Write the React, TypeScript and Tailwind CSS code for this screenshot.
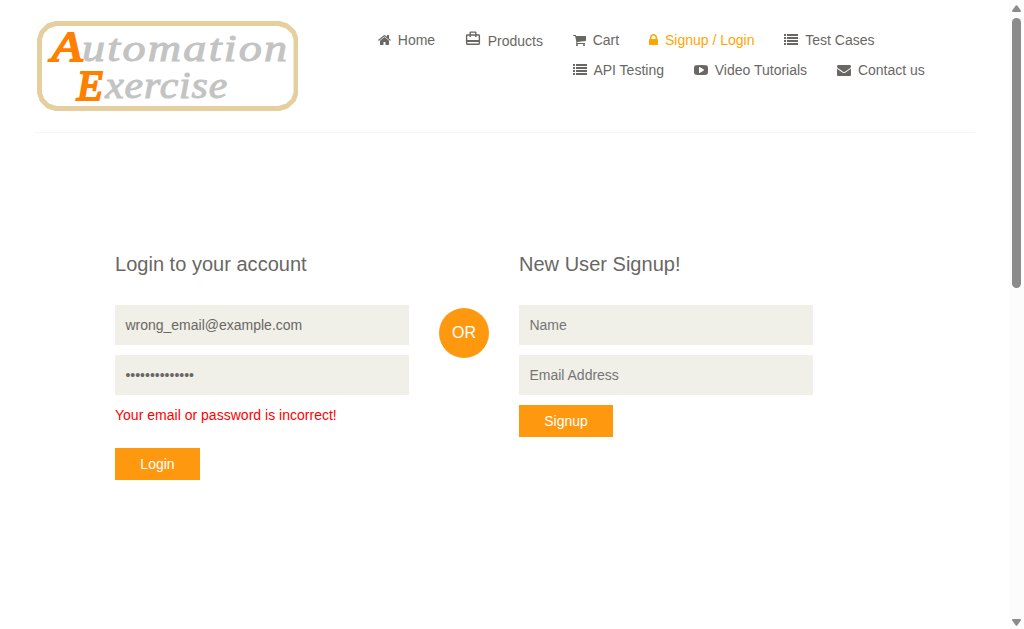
import React from "react";

type IconProps = { d: string; viewBox: string; className: string };

function Glyph({ d, viewBox, className }: IconProps) {
  return (
    <svg viewBox={viewBox} className={className} fill="currentColor" aria-hidden="true">
      <path d={d} />
    </svg>
  );
}

const HOME =
  "M1472 992v480q0 26-19 45t-45 19h-384v-384h-256v384h-384q-26 0-45-19t-19-45v-480q0-1 .5-3t.5-3l575-474 575 474q1 2 1 6zm223-69l-62 74q-8 9-21 11h-3q-13 0-21-7l-692-577-692 577q-12 8-24 7-13-2-21-11l-62-74q-8-10-7-23.5t11-21.5l719-599q32-26 76-26t76 26l244 204v-195q0-14 9-23t23-9h192q14 0 23 9t9 23v408l219 182q10 8 11 21.5t-7 23.5z";
const TRAVEL =
  "M20 6h-3V4c0-1.11-.89-2-2-2H9c-1.11 0-2 .89-2 2v2H4c-1.11 0-2 .89-2 2v11c0 1.11.89 2 2 2h16c1.11 0 2-.89 2-2V8c0-1.11-.89-2-2-2zM9 4h6v2H9V4zm11 15H4v-2h16v2zm0-5H4V8h3v2h2V8h6v2h2V8h3v6z";
const CART =
  "M704 1536q0 52-38 90t-90 38-90-38-38-90 38-90 90-38 90 38 38 90zm896 0q0 52-38 90t-90 38-90-38-38-90 38-90 90-38 90 38 38 90zm128-1088v512q0 24-16.5 42.5t-40.5 21.5l-1044 122q13 60 13 70 0 16-24 64h920q26 0 45 19t19 45-19 45-45 19h-1024q-26 0-45-19t-19-45q0-11 8-31.5t16-36 21.5-40 15.5-29.5l-177-823h-204q-26 0-45-19t-19-45 19-45 45-19h256q16 0 28.5 6.5t19.5 15.5 13 24.5 8 26 5.5 29.5 4.5 26h1201q26 0 45 19t19 45z";
const LOCK =
  "M640 768h512v-192q0-106-75-181t-181-75-181 75-75 181v192zm832 96v576q0 40-28 68t-68 28h-960q-40 0-68-28t-28-68v-576q0-40 28-68t68-28h32v-192q0-184 132-316t316-132 316 132 132 316v192h32q40 0 68 28t28 68z";
const LIST =
  "M0 1h2v2H0zM3 1h11v2H3zM0 4h2v2H0zM3 4h11v2H3zM0 7h2v2H0zM3 7h11v2H3zM0 10h2v2H0zM3 10h11v2H3z";
const PLAY =
  "M1280 896q0-37-30-54l-512-320q-31-20-65-2-33 18-33 56v640q0 38 33 56 16 8 31 8 20 0 34-10l512-320q30-17 30-54zm512 0q0 96-1 150t-8.5 136.5-22.5 147.5q-16 73-69 123t-124 58q-222 25-671 25t-671-25q-71-8-124.5-58t-69.5-123q-14-65-21.5-147.5t-8.5-136.5-1-150 1-150 8.500-136.500 22.500-147.500q16-73 69-123t124-58q222-25 671-25t671 25q71 8 124.500 58t69.500 123q14 65 21.500 147.500t8.500 136.500 1 150z";
const MAIL =
  "M1792 710v794q0 66-47 113t-113 47h-1472q-66 0-113-47t-47-113v-794q44 49 101 87 362 246 497 345 57 42 92.5 65.5t94.5 48 110 24.5h2q51 0 110-24.5t94.5-48 92.5-65.5q170-123 498-345 57-39 100-87zm0-294q0 79-49 151t-122 123q-376 261-468 325-10 7-42.5 30.5t-54 38-52 32.5-57.5 27-50 9h-2q-23 0-50-9t-57.5-27-52-32.5-54-38-42.5-30.5q-91-64-262-182.5t-205-142.5q-62-42-117-115.5t-55-136.5q0-78 41.5-130t118.5-52h1472q65 0 112.5 47t47.5 113z";

function NavItem({ icon, label, active }: { icon: React.ReactNode; label: string; active?: boolean }) {
  return (
    <li>
      <a href="#" className={active ? "flex items-center gap-[6.8px] text-[#ffa500]" : "flex items-center gap-[6.8px]"}>
        {icon}
        <span>{label}</span>
      </a>
    </li>
  );
}

function Logo() {
  return (
    <svg width="261" height="90" viewBox="0 0 261 90" role="img" aria-label="Automation Exercise">
      <path
        d="M19 2.5H242L250 5L256.500 11L259 18V72L256.500 79L250 85L242 87.500H19L11 85L5 79L2.500 72V18L5 11L11 5Z"
        fill="#fff"
        stroke="#e6cf9f"
        strokeWidth="5"
        strokeLinejoin="round"
      />
      <g className="font-['Liberation_Serif',serif] italic" fill="#c3c3c3" stroke="#c3c3c3" strokeWidth="1">
        <g transform="scale(1.2 1)">
          <text x="12" y="40" fontSize="42" fill="#ff7f00" stroke="#ff7f00" strokeWidth="2">A</text>
          <text x="37.500" y="40" fontSize="38.5" textLength="171" lengthAdjust="spacing">utomation</text>
        </g>
        <text x="40" y="79" fontSize="42" fill="#ff7f00" stroke="#ff7f00" strokeWidth="2.2">E</text>
        <g transform="scale(1.1 1)">
          <text x="62" y="77" fontSize="38" textLength="111" lengthAdjust="spacing">xercise</text>
        </g>
      </g>
    </svg>
  );
}

const field = "block h-10 w-full bg-[#f0f0e9] px-[10.4px] text-sm text-[#696763] outline-none placeholder:text-[#757575]";
const button = "block h-8 bg-[#fe980f] text-sm text-white";

export default function App() {
  const list = <Glyph d={LIST} viewBox="0 0 14 14" className="h-3.5 w-3.5" />;
  return (
    <div className="flex h-[629px] overflow-hidden bg-white font-['Liberation_Sans',Arial,sans-serif] text-sm text-[#696763]">
      <div className="flex-1">
        <header className="ml-[35px] flex h-[133px] w-[940px] border-b border-[#f5f5f5] pt-[21px]">
          <a href="#" className="ml-0.5 h-[90px] w-[262px]">
            <Logo />
          </a>
          <nav className="ml-[79px] pt-[9px] leading-5">
            <ul className="flex h-5 gap-[30px]">
              <NavItem icon={<Glyph d={HOME} viewBox="64 0 1664 1792" className="h-3.5 w-[13px]" />} label="Home" />
              <li>
                <a href="#" className="flex items-center gap-[6.5px] pt-px">
                  <Glyph d={TRAVEL} viewBox="1.5 0 21 24" className="-mt-[6px] h-[17px] w-4" />
                  <span>Products</span>
                </a>
              </li>
              <NavItem icon={<Glyph d={CART} viewBox="64 0 1664 1792" className="h-3.5 w-[13px]" />} label="Cart" />
              <NavItem active icon={<Glyph d={LOCK} viewBox="320 0 1152 1792" className="h-3.5 w-[9px]" />} label="Signup / Login" />
              <NavItem icon={list} label="Test Cases" />
            </ul>
            <ul className="ml-[194.6px] mt-2.5 flex h-5 gap-[30px]">
              <NavItem icon={list} label="API Testing" />
              <NavItem icon={<Glyph d={PLAY} viewBox="0 0 1792 1792" className="h-3.5 w-3.5" />} label="Video Tutorials" />
              <NavItem icon={<Glyph d={MAIL} viewBox="0 0 1792 1792" className="h-3.5 w-3.5" />} label="Contact us" />
            </ul>
          </nav>
        </header>

        <main className="ml-[115px] mt-[120px] flex items-start">
          <form className="w-[294px]">
            <h2 className="mb-[30px] text-[20px] leading-[22px] tracking-[0.02px]">Login to your account</h2>
            <input className={field} type="email" defaultValue="wrong_email@example.com" />
            <input className={field + " mt-2.5"} type="password" defaultValue="wrongpassword1" />
            <p className="mt-2.5 leading-5 tracking-[0.015px] text-[#ff0000]">Your email or password is incorrect!</p>
            <button type="button" className={button + " mt-[23px] w-[85px]"}>Login</button>
          </form>
          <h2 className="mx-[30px] mt-[55px] h-[50px] w-[50px] rounded-full bg-[#fe980f] text-center text-base leading-[50px] text-white">OR</h2>
          <form className="w-[294px]">
            <h2 className="mb-[30px] text-[20px] leading-[22px] tracking-[0.02px]">New User Signup!</h2>
            <input className={field} type="text" placeholder="Name" />
            <input className={field + " mt-2.5"} type="email" placeholder="Email Address" />
            <button type="button" className={button + " mt-2.5 w-[94px]"}>Signup</button>
          </form>
        </main>
      </div>

      <div className="flex w-[15px] flex-col items-center bg-[#fcfcfc] pb-[3px] pt-[5px]">
        <svg viewBox="0 0 9 7" className="h-[7px] w-[9px] shrink-0" fill="#8b8b8b"><path d="M3.8.6Q4.5-.3 5.2.6L8.8 5.6Q9.2 7 8 7H1Q-.2 7 .2 5.6Z" /></svg>
        <div className="mt-1.5 h-[270px] w-[9px] rounded-full bg-[#8b8b8b]" />
        <svg viewBox="0 0 9 7" className="mt-auto h-[7px] w-[9px] shrink-0" fill="#8b8b8b"><path d="M3.8 6.4Q4.5 7.3 5.2 6.4L8.8 1.4Q9.2 0 8 0H1Q-.2 0 .2 1.4Z" /></svg>
      </div>
    </div>
  );
}
